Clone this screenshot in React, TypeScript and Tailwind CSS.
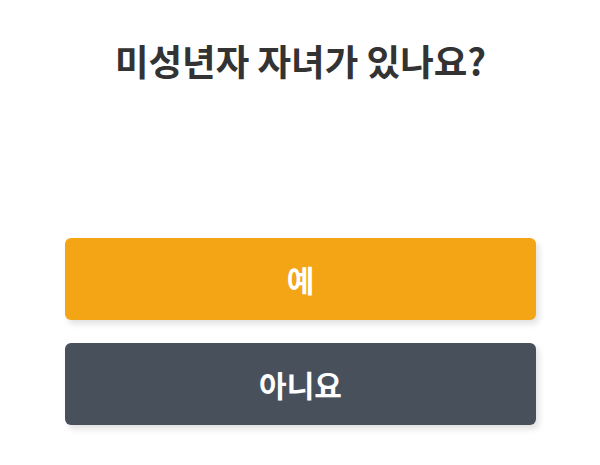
export default function App() {
  return (
    <main className="min-h-screen bg-white pl-[65px] pr-[64px] pt-[37px] font-['Noto_Sans_CJK_KR','Noto_Sans',sans-serif]">
      <h1 className="text-center text-[36.5px] font-bold leading-[48px] text-[#333333]">미성년자 자녀가 있나요?</h1>
      <div className="mt-[153px] flex flex-col gap-[23px]">
        <button className="h-[82px] w-full rounded-md bg-[#f3a516] text-[30px] font-bold text-white shadow-[3px_4px_6px_rgba(0,0,0,0.12)]">
          예
        </button>
        <button className="h-[82px] w-full rounded-md bg-[#48515b] text-[30px] font-bold text-white shadow-[3px_4px_6px_rgba(0,0,0,0.12)]">
          아니요
        </button>
      </div>
    </main>
  );
}
